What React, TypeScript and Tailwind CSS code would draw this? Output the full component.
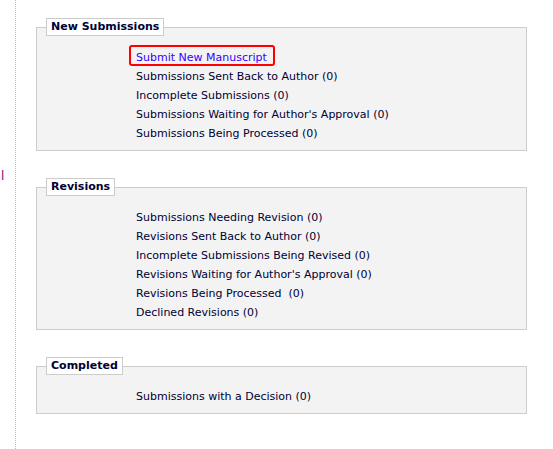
import React from "react";

type Item = { label: string; link?: boolean; boxed?: boolean };

const sections: { title: string; items: Item[] }[] = [
  {
    title: "New Submissions",
    items: [
      { label: "Submit New Manuscript", link: true, boxed: true },
      { label: "Submissions Sent Back to Author (0)" },
      { label: "Incomplete Submissions (0)" },
      { label: "Submissions Waiting for Author's Approval (0)" },
      { label: "Submissions Being Processed (0)" },
    ],
  },
  {
    title: "Revisions",
    items: [
      { label: "Submissions Needing Revision (0)" },
      { label: "Revisions Sent Back to Author (0)" },
      { label: "Incomplete Submissions Being Revised (0)" },
      { label: "Revisions Waiting for Author's Approval (0)" },
      { label: "Revisions Being Processed\u00a0 (0)" },
      { label: "Declined Revisions (0)" },
    ],
  },
  {
    title: "Completed",
    items: [{ label: "Submissions with a Decision (0)" }],
  },
];

function Section({ title, items }: { title: string; items: Item[] }) {
  return (
    <fieldset className="border border-[#cccccc] bg-[#f3f3f3] pt-[12px] pb-[7px]">
      <legend className="ml-[9px] border border-[#cccccc] bg-white px-[4px] h-[18px] leading-[16px] text-[11px] font-bold text-[#000033]">
        {title}
      </legend>
      <ul className="pl-[99px]">
        {items.map((item) => (
          <li key={item.label} className="h-[19px] leading-[19px] whitespace-nowrap">
            {item.link ? (
              <a href="#" className="relative text-[#3300ff]">
                {item.label}
                {item.boxed && (
                  <span className="absolute -left-[7px] -top-[6px] h-[21px] w-[146px] rounded-[3px] border-2 border-[#ff0000]" />
                )}
              </a>
            ) : (
              <span className="text-[#000033]">{item.label}</span>
            )}
          </li>
        ))}
      </ul>
    </fieldset>
  );
}

export default function App() {
  return (
    <div
      className="flex min-h-[449px] w-[553px] bg-white text-[11px]"
      style={{ fontFamily: '"DejaVu Sans", Verdana, sans-serif' }}
    >
      {/* clipped left column */}
      <div className="w-[16px] border-r border-dotted border-[#bbbbbb]">
        <div className="pt-[169px] pl-[1px] text-[12px] leading-[14px] text-[#800080]">l</div>
      </div>
      <div className="flex w-[511px] flex-col gap-[27px] pl-[20px] pt-[18px]">
        {sections.map((s) => (
          <Section key={s.title} title={s.title} items={s.items} />
        ))}
      </div>
    </div>
  );
}
